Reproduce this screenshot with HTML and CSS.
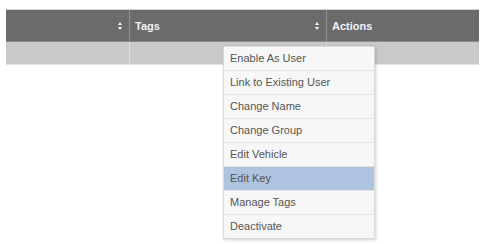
FILE: index.html
```html
<!DOCTYPE html>
<html lang="en">
<head>
    <meta charset="UTF-8">
    <title>Drivers</title>
    <link rel="stylesheet" href="styles.css">
</head>
<body>
    <div class="grid-wrap">
        <table class="grid">
            <thead>
                <tr>
                    <th class="col-name"><span class="sort"></span></th>
                    <th class="col-tags">Tags<span class="sort"></span></th>
                    <th class="col-actions">Actions</th>
                </tr>
            </thead>
            <tbody>
                <tr>
                    <td></td>
                    <td></td>
                    <td></td>
                </tr>
            </tbody>
        </table>

        <ul class="action-menu">
            <li>Enable As User</li>
            <li>Link to Existing User</li>
            <li>Change Name</li>
            <li>Change Group</li>
            <li>Edit Vehicle</li>
            <li class="active">Edit Key</li>
            <li>Manage Tags</li>
            <li>Deactivate</li>
        </ul>
    </div>
</body>
</html>
```

FILE: styles.css
```css
html, body {
    height: 100%;
}
body {
    margin: 0;
    padding: 9px 7px 0 6px;
    box-sizing: border-box;
    background-color: #fff;
    font-family: 'Liberation Sans', Arial, sans-serif;
    font-size: 11px;
}
.grid-wrap {
    position: relative;
    height: 100%;
}
.grid {
    width: 473px;
    border-collapse: collapse;
    table-layout: fixed;
}
.grid th {
    height: 31px;
    padding: 0 0 0 5px;
    background-color: #6b6b6b;
    border-top: 1px solid #d4d4d4;
    border-bottom: 1px solid #8c8c8c;
    border-left: 1px solid #929292;
    color: #eef2f8;
    font-weight: bold;
    text-align: left;
    position: relative;
}
.grid th:first-child {
    border-left: none;
}
.col-name {
    width: 118px;
}
.col-tags {
    width: 191px;
}
.sort {
    position: absolute;
    right: 6px;
    top: 12px;
    width: 5px;
    height: 8px;
}
.sort::before,
.sort::after {
    content: '';
    position: absolute;
    left: 0;
    border-left: 2.5px solid transparent;
    border-right: 2.5px solid transparent;
}
.sort::before {
    top: 0;
    border-bottom: 3px solid #f4f4f4;
}
.sort::after {
    bottom: 0;
    border-top: 3px solid #f4f4f4;
}
.grid td {
    height: 22px;
    padding: 0;
    background-color: #c9c9c9;
    border-left: 1px solid #dcdcdc;
    border-bottom: 1px solid #e2e2e2;
}
.grid td:first-child {
    border-left: none;
}
.action-menu {
    position: absolute;
    left: 217px;
    top: 37px;
    width: 150px;
    margin: 0;
    padding: 0;
    list-style: none;
    background-color: #f7f7f7;
    border: 1px solid #dadada;
    box-shadow: 1px 1px 3px rgba(0, 0, 0, 0.18);
}
.action-menu li {
    height: 23px;
    line-height: 23px;
    padding-left: 6px;
    color: #555;
    border-top: 1px solid #e4e4e4;
}
.action-menu li:first-child {
    border-top: none;
}
.action-menu li.active {
    background-color: #adc3df;
}
```
